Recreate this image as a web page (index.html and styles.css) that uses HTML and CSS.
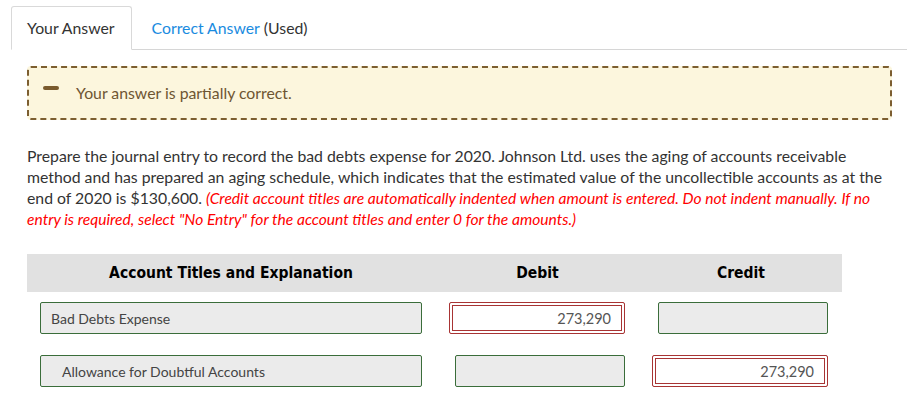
FILE: index.html
```html
<!DOCTYPE html>
<html>
<head>
<meta charset="utf-8">
<link rel="stylesheet" href="styles.css">
</head>
<body>
<div class="tabs">
  <div class="tab active">Your Answer</div>
  <div class="tab"><span class="link">Correct Answer</span> (Used)</div>
</div>
<div class="content">
  <div class="alert">
    <span class="minus"></span>
    <span class="alert-text">Your answer is partially correct.</span>
  </div>
  <p class="question">Prepare the journal entry to record the bad debts expense for 2020. Johnson Ltd. uses the aging of accounts receivable method and has prepared an aging schedule, which indicates that the estimated value of the uncollectible accounts as at the end of 2020 is $130,600. <em class="note">(Credit account titles are automatically indented when amount is entered. Do not indent manually. If no entry is required, select "No Entry" for the account titles and enter 0 for the amounts.)</em></p>
  <div class="journal">
    <div class="head">Account Titles and Explanation</div>
    <div class="head">Debit</div>
    <div class="head">Credit</div>

    <div class="cell acct"><div class="field ok">Bad Debts Expense</div></div>
    <div class="cell amt debit"><div class="field wrong num">273,290</div></div>
    <div class="cell amt credit"><div class="field ok num"></div></div>

    <div class="cell acct"><div class="field ok indent">Allowance for Doubtful Accounts</div></div>
    <div class="cell amt debit"><div class="field ok num"></div></div>
    <div class="cell amt credit"><div class="field wrong num">273,290</div></div>
  </div>
</div>
</body>
</html>
```
FILE: styles.css
```css
* { box-sizing: border-box; }
body {
  margin: 0;
  font-family: Lato, "Open Sans", sans-serif;
  color: #333;
  background: #fff;
}
.tabs {
  display: flex;
  margin: 6px 13px 0 11px;
  border-bottom: 1px solid #d6d6d6;
  height: 44px;
}
.tab {
  height: 44px;
  display: flex;
  align-items: center;
  padding: 0 16px 2px 15px;
  font-size: 15.8px;
  color: #333;
  white-space: nowrap;
}
.tab.active {
  border: 1px solid #d9d9d9;
  border-bottom: 1px solid #fff;
  border-radius: 3px 3px 0 0;
  background: #fff;
}
.tab + .tab { padding-left: 20px; }
.link { color: #1a8be0; margin-right: 4px; }
.content { padding-left: 27px; }
.alert {
  margin-top: 16px;
  width: 865px;
  height: 54px;
  border: 2px dashed #7c5e30;
  border-radius: 4px;
  background: #fcf6dd;
  display: flex;
  align-items: center;
  padding-left: 14px;
  padding-bottom: 2px;
}
.minus {
  width: 16px;
  height: 4px;
  border-radius: 2px;
  background: #7a5b2d;
  margin-right: 17px;
  margin-top: -8px;
}
.alert-text { font-size: 15.8px; color: #6e5532; }
.question {
  width: 865px;
  margin: 25px 0 0;
  font-size: 15.8px;
  line-height: 21px;
  color: #333;
}
.note { color: #f00; font-size: 15.6px; line-height: 20px; }
.journal {
  margin-top: 25px;
  width: 815px;
  display: grid;
  grid-template-columns: 408px 205px 202px;
}
.head {
  background: #e1e1e1;
  height: 38px;
  display: flex;
  align-items: center;
  justify-content: center;
  font-family: "DejaVu Sans Condensed", "DejaVu Sans", sans-serif;
  font-weight: bold;
  font-size: 15.5px;
  color: #000;
}
.cell { display: flex; padding-top: 10px; padding-bottom: 11px; }
.acct { padding-left: 13px; }
.amt { justify-content: flex-end; }
.debit { padding-right: 15px; }
.credit { padding-right: 14px; }
.field {
  height: 32px;
  border-radius: 2px;
  display: flex;
  align-items: center;
  font-size: 14px;
  color: #444;
}
.acct .field { width: 382px; padding-left: 10px; }
.field.indent { padding-left: 21px; }
.field.ok {
  border: 1px solid #3a6d3a;
  background: #ebebeb;
}
.amt .field.ok { width: 170px; }
.field.wrong {
  width: 176px;
  border: 1px solid #a83434;
  background: #fff;
  box-shadow: inset 0 0 0 2px #fff, inset 0 0 0 3px #a83434;
}
.num { justify-content: flex-end; padding-right: 13px; color: #555; font-size: 14.5px; }
```
